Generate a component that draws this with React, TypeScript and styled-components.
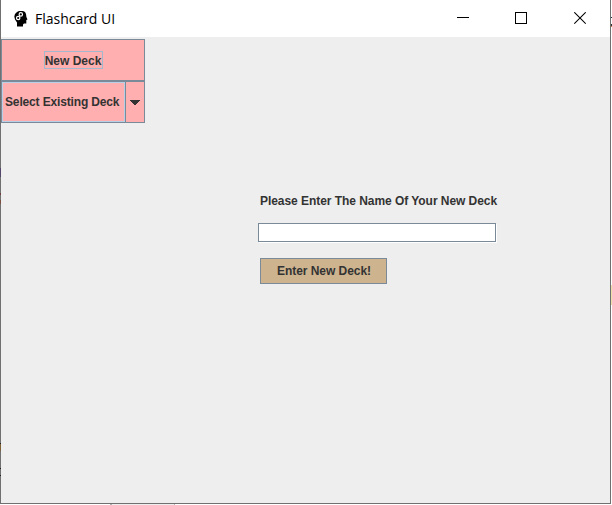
import React from "react";
import styled, { createGlobalStyle } from "styled-components";

const GlobalStyle = createGlobalStyle`
  * { box-sizing: border-box; }
  body { margin: 0; background: #fff; overflow: hidden; }
  button, input { font: inherit; color: inherit; margin: 0; padding: 0; border-radius: 0; outline: none; }
`;

const Desktop = styled.div`
  position: relative;
  width: 612px;
  height: 505px;
  background: #fff;
`;

/* Slivers of other windows that show past the edges of this one. */
const Sliver = styled.i<{ $x: number; $y: number; $w: number; $h: number; $color: string }>`
  position: absolute;
  left: ${(p) => p.$x}px;
  top: ${(p) => p.$y}px;
  width: ${(p) => p.$w}px;
  height: ${(p) => p.$h}px;
  background: ${(p) => p.$color};
`;

const slivers = [
  { x: 110, y: 504, w: 65, h: 1, color: "#eeeeee" },
  { x: 110, y: 504, w: 2, h: 1, color: "#b0b0b0" },
  { x: 174, y: 504, w: 1, h: 1, color: "#b8b8b8" },
  { x: 611, y: 17, w: 1, h: 1, color: "#223344" },
  { x: 611, y: 24, w: 1, h: 2, color: "#333333" },
  { x: 611, y: 26, w: 1, h: 1, color: "#d08050" },
  { x: 611, y: 285, w: 1, h: 20, color: "#eee0a8" },
  { x: 0, y: 168, w: 1, h: 9, color: "#54456b" },
  { x: 0, y: 193, w: 1, h: 2, color: "#6b4038" },
  { x: 0, y: 200, w: 1, h: 4, color: "#7a5040" },
  { x: 0, y: 443, w: 1, h: 1, color: "#222222" },
  { x: 0, y: 444, w: 1, h: 7, color: "#7d6238" },
  { x: 0, y: 468, w: 1, h: 1, color: "#222222" },
  { x: 0, y: 475, w: 1, h: 1, color: "#222222" },
];

const Window = styled.div`
  width: 611px;
  height: 504px;
  display: flex;
  flex-direction: column;
  border: 1px solid #707070;
  border-top: 0;
  background: #eeeeee;
`;

const TitleBar = styled.header`
  height: 37px;
  flex: none;
  display: flex;
  align-items: center;
  padding-left: 12px;
  background: #fff;
`;

const Title = styled.h1`
  margin: 0 auto 0 7px;
  font: 400 14px/20px "Open Sans", sans-serif;
  letter-spacing: -0.02px;
  white-space: nowrap;
  color: #000;
`;

const WindowControl = styled.button<{ $width: number }>`
  width: ${(p) => p.$width}px;
  height: 37px;
  display: flex;
  align-items: center;
  justify-content: center;
  border: 0;
  background: transparent;
`;

const Content = styled.main`
  flex: 1;
  display: flex;
  align-items: flex-start;
  padding-top: 2px;
  font: 700 12px/14px "Liberation Sans", Arial, sans-serif;
  color: #333;
`;

const Sidebar = styled.nav`
  width: 144px;
  display: flex;
  flex-direction: column;
`;

const DeckButton = styled.button`
  height: 42px;
  display: flex;
  align-items: center;
  justify-content: center;
  border: 1px solid #7a8a99;
  background: #ffafaf;
`;

const FocusLabel = styled.span`
  width: 59px;
  height: 18px;
  padding-top: 2px;
  display: flex;
  align-items: center;
  justify-content: center;
  border: 1px solid #a3b8cc;
  white-space: nowrap;
`;

const DeckSelect = styled.div`
  height: 42px;
  display: flex;
  border: 1px solid #7a8a99;
  background: #ffafaf;
`;

const SelectValue = styled.div`
  width: 123px;
  display: flex;
  align-items: center;
  padding-left: 2px;
  border: 1px solid #b8cfe5;
  letter-spacing: -0.15px;
  white-space: nowrap;
`;

const SelectArrow = styled.button`
  flex: 1;
  display: flex;
  align-items: center;
  justify-content: center;
  border: 0;
  border-left: 1px solid #7a8a99;
  background: transparent;
`;

const Form = styled.form`
  margin: 155px 0 0 112px;
  display: flex;
  flex-direction: column;
  align-items: flex-start;
`;

const Label = styled.label`
  margin-left: 3px;
  letter-spacing: -0.05px;
  white-space: nowrap;
`;

const DeckInput = styled.input`
  && {
    width: 238px;
    height: 19px;
    margin: 15px 0 0 1px;
    padding: 0 3px;
    border: 1px solid #7a8a99;
    background: #fff;
    box-shadow: 1px 1px 0 #fff;
  }
`;

const SubmitButton = styled.button`
  && {
    width: 127px;
    height: 26px;
    margin: 16px 0 0 3px;
    padding-left: 1px;
    border: 1px solid #7a8a99;
    background: #cdb48f;
    letter-spacing: -0.05px;
    white-space: nowrap;
  }
`;

const HeadIcon = () => (
  <svg width="15" height="18" viewBox="0 0 15 18">
    <path
      d="M6 1h4l2 1 1 2 .4 3L14.5 9.5l-1.2.5V13.5H11l-1 1v2H4v-4l-2-3-.7-3L2 4l2-2z"
      fill="#000"
    />
    <g fill="none" stroke="#fff" strokeWidth="1.2">
      <circle cx="7.8" cy="4.4" r="1.7" />
      <circle cx="5.2" cy="8" r="1.7" />
    </g>
  </svg>
);

export default function App() {
  return (
    <Desktop>
      <GlobalStyle />
      <Window>
        <TitleBar>
          <HeadIcon />
          <Title>Flashcard UI</Title>
          <WindowControl $width={58} aria-label="Minimize">
            <svg width="12" height="13" shapeRendering="crispEdges">
              <path d="M0 5h12v1H0z" />
            </svg>
          </WindowControl>
          <WindowControl $width={58} aria-label="Maximize">
            <svg width="12" height="13" shapeRendering="crispEdges">
              <path d="M.5 .5h11v11H.5z" fill="none" stroke="#000" />
            </svg>
          </WindowControl>
          <WindowControl $width={60} aria-label="Close">
            <svg width="12" height="13">
              <path d="M.3 .3l11.4 11.4M11.7 .3L.3 11.7" stroke="#000" strokeWidth="1.1" />
            </svg>
          </WindowControl>
        </TitleBar>
        <Content>
          <Sidebar>
            <DeckButton>
              <FocusLabel>New Deck</FocusLabel>
            </DeckButton>
            <DeckSelect>
              <SelectValue>Select Existing Deck</SelectValue>
              <SelectArrow aria-label="Show decks">
                <svg width="10" height="5" shapeRendering="crispEdges">
                  <path d="M0 0h10v1H9v1H8v1H7v1H6v1H4V4H3V3H2V2H1V1H0z" fill="#333" />
                </svg>
              </SelectArrow>
            </DeckSelect>
          </Sidebar>
          <Form onSubmit={(e) => e.preventDefault()}>
            <Label htmlFor="deck">Please Enter The Name Of Your New Deck</Label>
            <DeckInput id="deck" type="text" />
            <SubmitButton type="submit">Enter New Deck!</SubmitButton>
          </Form>
        </Content>
      </Window>
      {slivers.map((s, i) => (
        <Sliver key={i} $x={s.x} $y={s.y} $w={s.w} $h={s.h} $color={s.color} />
      ))}
    </Desktop>
  );
}
